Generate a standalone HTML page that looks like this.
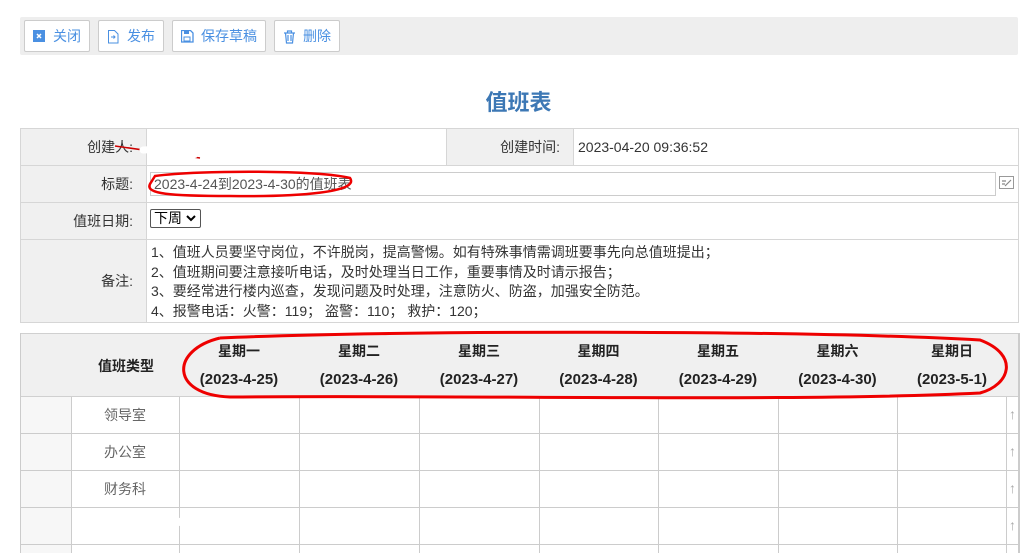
<!DOCTYPE html>
<html><head><meta charset="utf-8"><style>
*{box-sizing:border-box;margin:0;padding:0}
body{width:1027px;height:553px;overflow:hidden;background:#fff;font-family:"Liberation Sans","Noto Sans CJK SC",sans-serif;font-size:14px;color:#333;position:relative}
.a{position:absolute}
.tb{left:20px;top:17px;width:998px;height:38px;background:#eeeeee;border-radius:2px}
.btn{top:20px;height:32px;border:1px solid #ccc;background:#fff;color:#4a90e2;font-size:14px;line-height:30px;padding-left:28px;border-radius:2px}
.btn svg{position:absolute;left:8px;top:9px}
.c{position:absolute;border:1px solid #d6d6d6}
.lab{background:#f0f0f0;text-align:right;padding-right:13px;color:#333}
.h{background:#f0f0f0;font-weight:bold;color:#222;text-align:center;font-size:14px}
.h b{font-size:15px}
.v{position:absolute;background:#ccc}
</style></head><body>
<div class="a tb"></div>
<div class="a btn" style="left:24px;width:66px"><svg width="13" height="13"><rect x="0" y="0" width="12" height="12" fill="#4a90e2"/><path d="M4 4L8 8M8 4L4 8" stroke="#fff" stroke-width="1.5"/></svg>关闭</div>
<div class="a btn" style="left:98px;width:66px"><svg width="13" height="14"><path d="M1.5 .5h6l3.5 3.5v9h-9.5z" fill="none" stroke="#4a90e2"/><path d="M4 7h4M6.5 5.5L8 7 6.5 8.5" fill="none" stroke="#4a90e2"/></svg>发布</div>
<div class="a btn" style="left:172px;width:94px"><svg width="14" height="13"><path d="M.5 .5h9l2.5 2.5v9h-11.5z" fill="none" stroke="#4a90e2" stroke-width="1.3"/><rect x="3" y="1" width="5" height="3" fill="#4a90e2"/><rect x="3" y="7" width="6" height="4" fill="none" stroke="#4a90e2"/></svg>保存草稿</div>
<div class="a btn" style="left:274px;width:66px"><svg width="13" height="14"><path d="M1 3h11M4.5 3V1h4v2M2.5 3l1 10h6l1-10M5 5v6M8 5v6" fill="none" stroke="#4a90e2" stroke-width="1.2"/></svg>删除</div>

<div class="a" style="left:0;width:1037px;top:85px;text-align:center;font-size:22px;font-weight:bold;color:#3d78b5">值班表</div>

<div class="c lab" style="left:20px;top:128px;width:127px;height:38px;line-height:37px">创建人:</div>
<div class="c" style="left:146px;top:128px;width:301px;height:38px"></div>
<div class="c lab" style="left:446px;top:128px;width:128px;height:38px;line-height:37px">创建时间:</div>
<div class="c" style="left:573px;top:128px;width:446px;height:38px;line-height:37px;padding-left:4px;font-size:14px">2023-04-20 09:36:52</div>
<div class="c lab" style="left:20px;top:165px;width:127px;height:38px;line-height:37px">标题:</div>
<div class="c" style="left:146px;top:165px;width:873px;height:38px"></div>
<div class="a" style="left:150px;top:172px;width:846px;height:24px;border:1px solid #ccc;line-height:22px;padding-left:3px;font-size:14px;color:#555">2023-4-24到2023-4-30的值班表</div>
<svg class="a" style="left:999px;top:176px" width="16" height="14"><rect x=".5" y=".5" width="14" height="12" fill="#fff" stroke="#999"/><path d="M3 5h4M3 8h3M6 10l6-6" stroke="#888" stroke-width="1.2"/></svg>
<div class="c lab" style="left:20px;top:202px;width:127px;height:38px;line-height:37px">值班日期:</div>
<div class="c" style="left:146px;top:202px;width:873px;height:38px"></div>
<div class="a" style="left:150px;top:209px;width:51px;height:19px;border:1px solid #555;border-radius:2px;font-size:14px;line-height:17px;padding-left:3px;color:#000">下周<svg width="12" height="10" style="margin-left:3px"><path d="M2 3l4 4 4-4" fill="none" stroke="#000" stroke-width="2"/></svg></div>
<div class="c lab" style="left:20px;top:239px;width:127px;height:84px;line-height:82px">备注:</div>
<div class="c" style="left:146px;top:239px;width:873px;height:84px;padding:3px 0 0 4px;font-size:14px;line-height:19.5px;color:#333">1、值班人员要坚守岗位，不许脱岗，提高警惕。如有特殊事情需调班要事先向总值班提出；<br>2、值班期间要注意接听电话，及时处理当日工作，重要事情及时请示报告；<br>3、要经常进行楼内巡查，发现问题及时处理，注意防火、防盗，加强安全防范。<br>4、报警电话：火警：119； 盗警：110； 救护：120；</div>

<div class="a" style="left:20px;top:333px;width:999px;height:64px;background:#f0f0f0;border:1px solid #d0d0d0"></div>
<div class="a h" style="left:71px;top:356px;width:110px">值班类型</div>
<div class="a h" style="left:179px;top:337px;width:120px;line-height:28px">星期一<br><b>(2023-4-25)</b></div>
<div class="a h" style="left:299px;top:337px;width:120px;line-height:28px">星期二<br><b>(2023-4-26)</b></div>
<div class="a h" style="left:419px;top:337px;width:120px;line-height:28px">星期三<br><b>(2023-4-27)</b></div>
<div class="a h" style="left:539px;top:337px;width:119px;line-height:28px">星期四<br><b>(2023-4-28)</b></div>
<div class="a h" style="left:658px;top:337px;width:120px;line-height:28px">星期五<br><b>(2023-4-29)</b></div>
<div class="a h" style="left:778px;top:337px;width:119px;line-height:28px">星期六<br><b>(2023-4-30)</b></div>
<div class="a h" style="left:897px;top:337px;width:110px;line-height:28px">星期日<br><b>(2023-5-1)</b></div>
<div class="a" style="left:20px;top:397px;width:51px;height:156px;background:#f7f7f7"></div>
<div class="v" style="left:20px;top:333px;width:1px;height:220px"></div>
<div class="v" style="left:71px;top:397px;width:1px;height:156px"></div>
<div class="v" style="left:179px;top:397px;width:1px;height:156px"></div>
<div class="v" style="left:299px;top:397px;width:1px;height:156px"></div>
<div class="v" style="left:419px;top:397px;width:1px;height:156px"></div>
<div class="v" style="left:539px;top:397px;width:1px;height:156px"></div>
<div class="v" style="left:658px;top:397px;width:1px;height:156px"></div>
<div class="v" style="left:778px;top:397px;width:1px;height:156px"></div>
<div class="v" style="left:897px;top:397px;width:1px;height:156px"></div>
<div class="v" style="left:1006px;top:397px;width:1px;height:156px"></div>
<div class="v" style="left:1018px;top:333px;width:2px;height:220px"></div>
<div class="v" style="left:20px;top:433px;width:999px;height:1px"></div>
<div class="v" style="left:20px;top:470px;width:999px;height:1px"></div>
<div class="v" style="left:20px;top:507px;width:999px;height:1px"></div>
<div class="v" style="left:20px;top:544px;width:999px;height:1px"></div>
<div class="a" style="left:71px;top:405px;width:108px;text-align:center;color:#666">领导室</div>
<div class="a" style="left:71px;top:442px;width:108px;text-align:center;color:#666">办公室</div>
<div class="a" style="left:71px;top:479px;width:108px;text-align:center;color:#666">财务科</div>
<div class="a" style="left:1007px;top:406px;width:11px;text-align:center;color:#aaa">↑</div>
<div class="a" style="left:1007px;top:443px;width:11px;text-align:center;color:#aaa">↑</div>
<div class="a" style="left:1007px;top:480px;width:11px;text-align:center;color:#aaa">↑</div>
<div class="a" style="left:1007px;top:517px;width:11px;text-align:center;color:#aaa">↑</div>

<svg class="a" style="left:0;top:0" width="1027" height="553">
<path d="M115 146 L200 158" stroke="#c00" stroke-width="1.5"/>
<path d="M143 150 L230 146" stroke="#fff" stroke-width="7" stroke-linecap="round"/>
<path d="M150 155 L195 155" stroke="#fff" stroke-width="6" stroke-linecap="round"/>
<path d="M155 176 C200 170 320 170 350 178 C360 192 300 197 230 196 C170 196 145 194 150 184 Z" fill="none" stroke="#e00" stroke-width="2.5"/>
<path d="M220 338 C400 330 800 330 980 340 C1020 355 1010 385 980 393 C800 402 500 395 230 397 C170 395 170 350 220 338" fill="none" stroke="#e00" stroke-width="3"/>
<path d="M85 520 L185 522" stroke="#fff" stroke-width="8" stroke-linecap="round"/>
</svg>
</body></html>
